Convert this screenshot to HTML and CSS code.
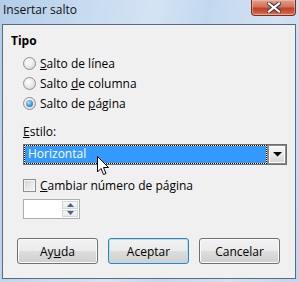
FILE: index.html
```html
<!DOCTYPE html>
<html>
<head>
<meta charset="utf-8">
<link rel="stylesheet" href="styles.css">
</head>
<body>
<div class="window">
  <div class="titlebar">
    <span class="title">Insertar salto</span>
    <div class="close">
      <svg width="14" height="11" viewBox="0 0 14 11">
        <path d="M2 1.5 L12 9.5 M12 1.5 L2 9.5" stroke="#3a3a3a" stroke-width="4.2" stroke-linecap="square"/>
        <path d="M2 1.5 L12 9.5 M12 1.5 L2 9.5" stroke="#ffffff" stroke-width="2.2" stroke-linecap="square"/>
      </svg>
    </div>
  </div>
  <div class="client">
    <div class="section-title">Tipo</div>
    <div class="options">
      <label class="row"><span class="radio"></span><span><u>S</u>alto de línea</span></label>
      <label class="row"><span class="radio"></span><span>Salto <u>d</u>e columna</span></label>
      <label class="row"><span class="radio checked"></span><span>Salto de <u>p</u>ágina</span></label>
      <div class="field-label"><u>E</u>stilo:</div>
      <div class="combo">
        <div class="combo-field">Horizontal</div>
        <div class="combo-btn">
          <svg width="9" height="5" viewBox="0 0 9 5"><path d="M0 0 H9 L4.5 4.5 Z" fill="#000"/></svg>
        </div>
      </div>
      <label class="row check-row"><span class="checkbox"></span><span><u>C</u>ambiar número de página</span></label>
      <div class="spin">
        <div class="spin-input"></div>
        <div class="spin-btns">
          <div class="spin-btn"><svg width="7" height="4" viewBox="0 0 7 4"><path d="M0 4 L3.5 0 L7 4 Z" fill="#4d6185"/></svg></div>
          <div class="spin-btn"><svg width="7" height="4" viewBox="0 0 7 4"><path d="M0 0 L3.5 4 L7 0 Z" fill="#4d6185"/></svg></div>
        </div>
      </div>
    </div>
    <div class="buttons">
      <button class="btn">Ay<u>u</u>da</button>
      <button class="btn default">Aceptar</button>
      <button class="btn">Cancelar</button>
    </div>
  </div>
  <svg class="cursor" width="13" height="20" viewBox="0 0 13 20">
    <path d="M0.5 0.5 L0.5 16 L4 12.5 L6.5 18.5 L9 17.5 L6.5 11.5 L11.5 11.5 Z" fill="#fff" stroke="#000" stroke-width="1"/>
  </svg>
</div>
</body>
</html>
```

FILE: styles.css
```css
html, body {
  margin: 0;
  padding: 0;
}
body {
  width: 299px;
  height: 282px;
  overflow: hidden;
  font-family: "Open Sans", "Noto Sans", sans-serif;
  font-size: 12px;
  color: #000;
}
.window {
  position: relative;
  width: 299px;
  height: 282px;
  display: flex;
  flex-direction: column;
  background: linear-gradient(100deg, #b3cde9 0%, #c7dbf0 25%, #d4e3f4 45%, #c3d8ef 60%, #d2e2f3 80%, #c0d6ee 100%);
}
.titlebar {
  height: 24px;
  display: flex;
  justify-content: space-between;
  align-items: flex-start;
}
.title {
  padding: 2px 0 0 3px;
  line-height: 16px;
  color: #101010;
}
.close {
  width: 45px;
  height: 16px;
  margin-right: 3px;
  box-sizing: border-box;
  border: 1px solid #7d2a1f;
  border-top: none;
  border-radius: 0 0 4px 4px;
  background: linear-gradient(#e0a08f 0%, #d2725b 45%, #c0412a 55%, #cd5a3f 85%, #e58a6e 100%);
  display: flex;
  align-items: center;
  justify-content: center;
  box-shadow: inset 0 0 0 1px rgba(255, 200, 180, 0.5);
}
.client {
  flex: 1;
  margin: 0 3px 3px 2px;
  border: 1px solid #5b6a7c;
  background: #f0f0f0;
  display: flex;
  flex-direction: column;
  padding: 8px 8px 14px 8px;
}
.section-title {
  font-weight: bold;
  line-height: 16px;
}
.options {
  padding-left: 12px;
  margin-top: 4px;
  display: flex;
  flex-direction: column;
}
.row {
  height: 20px;
  display: flex;
  align-items: center;
  gap: 4px;
}
.radio {
  width: 13px;
  height: 13px;
  box-sizing: border-box;
  border-radius: 50%;
  border: 1px solid #8e9093;
  background: radial-gradient(circle at 40% 35%, #ffffff 0%, #eeeeee 40%, #d0d0d0 100%);
  display: flex;
  align-items: center;
  justify-content: center;
}
.radio.checked::after {
  content: "";
  width: 7px;
  height: 7px;
  border-radius: 50%;
  background: radial-gradient(circle at 40% 35%, #b9e6ff 0%, #4aa3e6 45%, #1b5e9f 100%);
}
.checkbox {
  width: 13px;
  height: 13px;
  box-sizing: border-box;
  border: 1px solid #8e8f8f;
  background: linear-gradient(135deg, #cfcfcf 0%, #e6e6e6 50%, #f6f6f6 100%);
  box-shadow: inset 0 0 0 1px #f4f4f4;
}
.field-label {
  line-height: 16px;
  margin-top: 11px;
}
.combo {
  margin-top: 4px;
  height: 21px;
  box-sizing: border-box;
  display: flex;
  border: 1px solid #6e6e6e;
  background: #8a8a8a;
  padding: 1px;
  gap: 2px;
}
.combo-field {
  flex: 1;
  background: linear-gradient(#3399ff, #3399ff) padding-box, linear-gradient(#ffffff, #ffffff) border-box;
  border: 1px dotted #000;
  box-sizing: border-box;
  color: #fff;
  line-height: 15px;
  padding-left: 3px;
  margin: -1px 0 -1px -1px;
}
.combo-btn {
  width: 16px;
  box-sizing: border-box;
  border: 1px solid #fcfcfc;
  background: linear-gradient(#f6f6f6 0%, #e8e8e8 50%, #d6d6d6 100%);
  display: flex;
  align-items: center;
  justify-content: center;
}
.check-row {
  margin-top: 10px;
}
.spin {
  margin-top: 4px;
  width: 57px;
  height: 20px;
  box-sizing: border-box;
  border: 1px solid #abadb3;
  background: #fff;
  display: flex;
}
.spin-input {
  flex: 1;
}
.spin-btns {
  width: 16px;
  display: flex;
  flex-direction: column;
  gap: 1px;
  padding: 1px 1px 1px 0;
}
.spin-btn {
  flex: 1;
  background: linear-gradient(#f7f7f7, #e9e9e9);
  border: 1px solid #d6d6d6;
  display: flex;
  align-items: center;
  justify-content: center;
}
.buttons {
  margin-top: auto;
  display: flex;
  gap: 10px;
  padding-left: 6px;
}
.btn {
  width: 81px;
  height: 26px;
  box-sizing: border-box;
  font-family: inherit;
  font-size: 12px;
  color: #000;
  border: 1px solid #707070;
  border-radius: 3px;
  background: linear-gradient(#f2f2f2 0%, #ebebeb 48%, #dddddd 52%, #cfcfcf 100%);
  box-shadow: inset 0 0 0 1px #fbfbfb;
  padding: 0;
}
.btn.default {
  border-color: #3c7fb1;
  box-shadow: inset 0 0 0 1px #a9e4f7;
}
.cursor {
  position: absolute;
  left: 97px;
  top: 156px;
}
```
